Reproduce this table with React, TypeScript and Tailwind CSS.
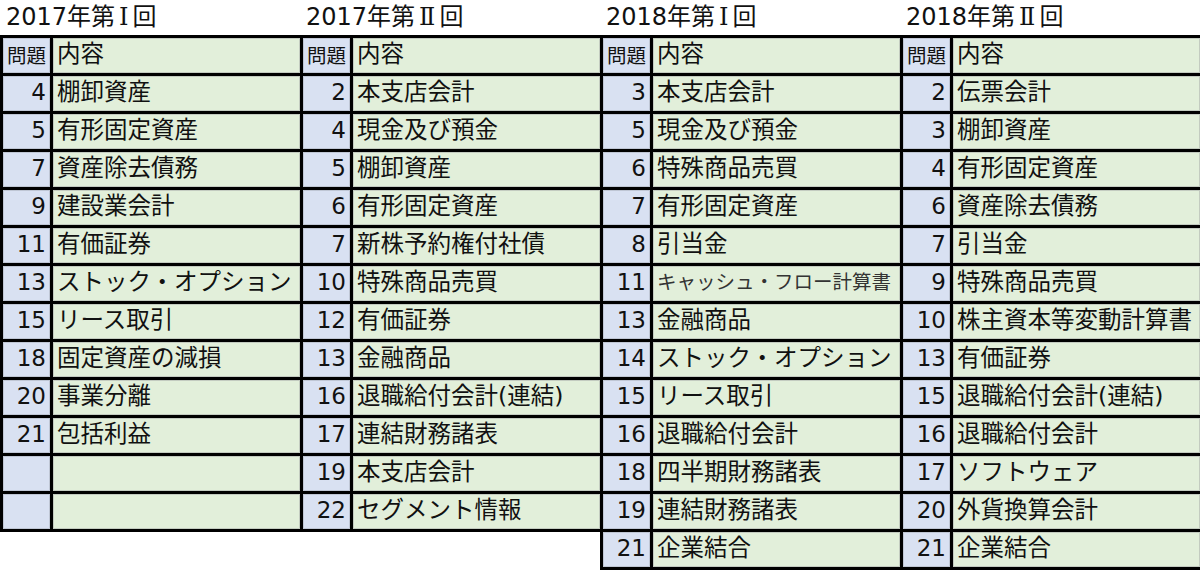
import React from "react";

type Row = { no: string; text: string; small?: boolean };

const groups: { title: string; num: string; rows: Row[] }[] = [
  {
    title: "2017年第",
    num: "Ⅰ",
    rows: [
      { no: "4", text: "棚卸資産" },
      { no: "5", text: "有形固定資産" },
      { no: "7", text: "資産除去債務" },
      { no: "9", text: "建設業会計" },
      { no: "11", text: "有価証券" },
      { no: "13", text: "ストック・オプション" },
      { no: "15", text: "リース取引" },
      { no: "18", text: "固定資産の減損" },
      { no: "20", text: "事業分離" },
      { no: "21", text: "包括利益" },
      { no: "", text: "" },
      { no: "", text: "" },
    ],
  },
  {
    title: "2017年第",
    num: "Ⅱ",
    rows: [
      { no: "2", text: "本支店会計" },
      { no: "4", text: "現金及び預金" },
      { no: "5", text: "棚卸資産" },
      { no: "6", text: "有形固定資産" },
      { no: "7", text: "新株予約権付社債" },
      { no: "10", text: "特殊商品売買" },
      { no: "12", text: "有価証券" },
      { no: "13", text: "金融商品" },
      { no: "16", text: "退職給付会計(連結)" },
      { no: "17", text: "連結財務諸表" },
      { no: "19", text: "本支店会計" },
      { no: "22", text: "セグメント情報" },
    ],
  },
  {
    title: "2018年第",
    num: "Ⅰ",
    rows: [
      { no: "3", text: "本支店会計" },
      { no: "5", text: "現金及び預金" },
      { no: "6", text: "特殊商品売買" },
      { no: "7", text: "有形固定資産" },
      { no: "8", text: "引当金" },
      { no: "11", text: "キャッシュ・フロー計算書", small: true },
      { no: "13", text: "金融商品" },
      { no: "14", text: "ストック・オプション" },
      { no: "15", text: "リース取引" },
      { no: "16", text: "退職給付会計" },
      { no: "18", text: "四半期財務諸表" },
      { no: "19", text: "連結財務諸表" },
      { no: "21", text: "企業結合" },
    ],
  },
  {
    title: "2018年第",
    num: "Ⅱ",
    rows: [
      { no: "2", text: "伝票会計" },
      { no: "3", text: "棚卸資産" },
      { no: "4", text: "有形固定資産" },
      { no: "6", text: "資産除去債務" },
      { no: "7", text: "引当金" },
      { no: "9", text: "特殊商品売買" },
      { no: "10", text: "株主資本等変動計算書" },
      { no: "13", text: "有価証券" },
      { no: "15", text: "退職給付会計(連結)" },
      { no: "16", text: "退職給付会計" },
      { no: "17", text: "ソフトウェア" },
      { no: "20", text: "外貨換算会計" },
      { no: "21", text: "企業結合" },
    ],
  },
];

export default function App() {
  return (
    <div className="w-[1200px] h-[572px] bg-white overflow-hidden flex items-start text-[#111] font-['DejaVu_Sans','Noto_Sans_CJK_JP',sans-serif]">
      {groups.map((g, gi) => (
        <div key={gi} className="w-[300px] shrink-0 flex flex-col">
          {/* year title */}
          <div className="h-[35px] flex items-center pl-[6px] pb-[2px] text-[24px] leading-[30px] whitespace-nowrap">
            {g.title}
            <span className="font-['DejaVu_Serif','Liberation_Serif',serif] px-[4px]">{g.num}</span>
            回
          </div>
          <div className="bg-black pl-[3px] py-[3px] grid grid-cols-[47px_247px] auto-rows-[35px] gap-[3px]">
            <div className="bg-[#d9e1f2] border border-[#bfc6d4] flex items-center justify-center pb-[2px] text-[19.5px] leading-none font-['Noto_Sans_CJK_JP',sans-serif]">
              問題
            </div>
            <div className="bg-[#e2efda] border border-[#c3cbc0] flex items-center pl-[3px] pb-[2px] text-[23.5px] leading-none">
              内容
            </div>
            {g.rows.map((r, ri) => (
              <React.Fragment key={ri}>
                <div className="bg-[#d9e1f2] border border-[#bfc6d4] flex items-center justify-end pr-[3px] pb-[2px] text-[23px] leading-none">
                  {r.no}
                </div>
                <div
                  className={
                    r.small
                      ? "bg-[#e2efda] border border-[#c3cbc0] flex items-center pl-[3px] pb-[2px] text-[19.5px] leading-none whitespace-nowrap text-[#333]"
                      : "bg-[#e2efda] border border-[#c3cbc0] flex items-center pl-[3px] pb-[2px] text-[23.5px] leading-none whitespace-nowrap"
                  }
                >
                  {r.text}
                </div>
              </React.Fragment>
            ))}
          </div>
        </div>
      ))}
    </div>
  );
}
